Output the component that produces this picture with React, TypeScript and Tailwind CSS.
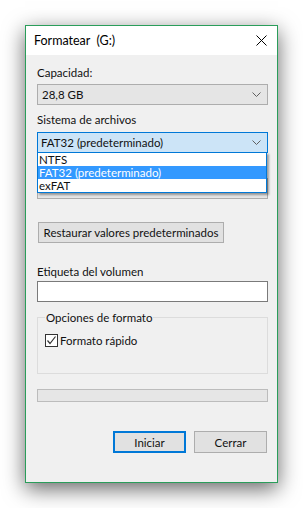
import React from "react";

const font = { fontFamily: 'Lato, "Noto Sans", sans-serif' };

function Chevron() {
  return (
    <svg width="9" height="5" viewBox="0 0 9 5" className="shrink-0">
      <path d="M0.5 0.5 L4.5 4.5 L8.5 0.5" fill="none" stroke="#606060" strokeWidth="1" />
    </svg>
  );
}

export default function App() {
  return (
    <div className="w-[303px] h-[508px] bg-white pt-[25px] pl-[25px] text-[11.5px] leading-[15px] text-[#111] whitespace-nowrap" style={font}>
      <div className="w-[253px] h-[458px] border border-[#2a9d5a] bg-[#f0f0f0] shadow-[0_6px_20px_rgba(0,0,0,0.6)] flex flex-col">
        {/* Title bar */}
        <div className="h-[29px] bg-white flex items-center justify-between pl-[8px] pr-[10px]">
          <span className="text-[12.5px] text-black">Formatear&nbsp; (G:)</span>
          <svg width="11" height="11" viewBox="0 0 11 11">
            <path d="M0.5 0.5 L10.5 10.5 M10.5 0.5 L0.5 10.5" stroke="#000" strokeWidth="1" />
          </svg>
        </div>
        {/* Body */}
        <div className="flex flex-col pl-[11px] pr-[9px] pt-[10px]">
          <div className="h-[15px]">Capacidad:</div>
          <div className="mt-[4px] h-[21px] border border-[#adadad] bg-[#e5e5e5] flex items-center justify-between pl-[4px] pr-[6px]">
            <span>28,8 GB</span>
            <Chevron />
          </div>
          <div className="mt-[7px] h-[15px]">Sistema de archivos</div>
          <div className="relative mt-[5px]">
            <div className="h-[21px] border border-[#0078d7] bg-[#cce4f7] flex items-center justify-between pl-[3px] pr-[6px]">
              <span>FAT32 (predeterminado)</span>
              <Chevron />
            </div>
            <div className="absolute left-0 top-[20px] w-[230px] border border-[#0078d7] bg-white z-10 shadow-[2px_2px_2px_rgba(0,0,0,0.35)] flex flex-col text-[11.5px]">
              <div className="h-[13px] leading-[13px] pl-[1px] overflow-hidden">NTFS</div>
              <div className="h-[13px] leading-[13px] pl-[1px] overflow-hidden bg-[#3399ff] text-white">FAT32 (predeterminado)</div>
              <div className="h-[13px] leading-[13px] pl-[1px] overflow-hidden">exFAT</div>
            </div>
            <div className="mt-[9px] h-[15px]" />
            <div className="mt-[1px] h-[21px] border border-[#adadad] bg-[#e5e5e5]" />
          </div>
          <div className="mt-[23px] w-[186px] h-[21px] border border-[#adadad] bg-[#e1e1e1] flex items-center justify-center ml-[1px]">
            Restaurar valores predeterminados
          </div>
          <div className="mt-[21px] h-[15px]">Etiqueta del volumen</div>
          <div className="mt-[2px] h-[21px] border border-[#7a7a7a] bg-white" />
          <div className="relative mt-[15px] h-[57px] border border-[#dcdcdc]">
            <span className="absolute left-[7px] top-[-8px] bg-[#f0f0f0] px-[1px]">Opciones de formato</span>
            <div className="flex items-center mt-[15px] ml-[7px]">
              <div className="w-[13px] h-[13px] border border-[#333333] bg-white flex items-center justify-center">
                <svg width="11" height="11" viewBox="0 0 11 11">
                  <path d="M1.5 5.5 L4 8.5 L9.5 1.5" fill="none" stroke="#333" strokeWidth="1.2" />
                </svg>
              </div>
              <span className="ml-[2px]">Formato rápido</span>
            </div>
          </div>
          <div className="mt-[15px] h-[13px] border border-[#bcbcbc] bg-[#e6e6e6]" />
          <div className="mt-[29px] flex justify-end gap-[8px] pr-[1px]">
            <div className="w-[73px] h-[22px] border-2 border-[#0078d7] bg-[#e1e1e1] flex items-center justify-center">Iniciar</div>
            <div className="w-[73px] h-[22px] border border-[#adadad] bg-[#e1e1e1] flex items-center justify-center">Cerrar</div>
          </div>
        </div>
      </div>
    </div>
  );
}
